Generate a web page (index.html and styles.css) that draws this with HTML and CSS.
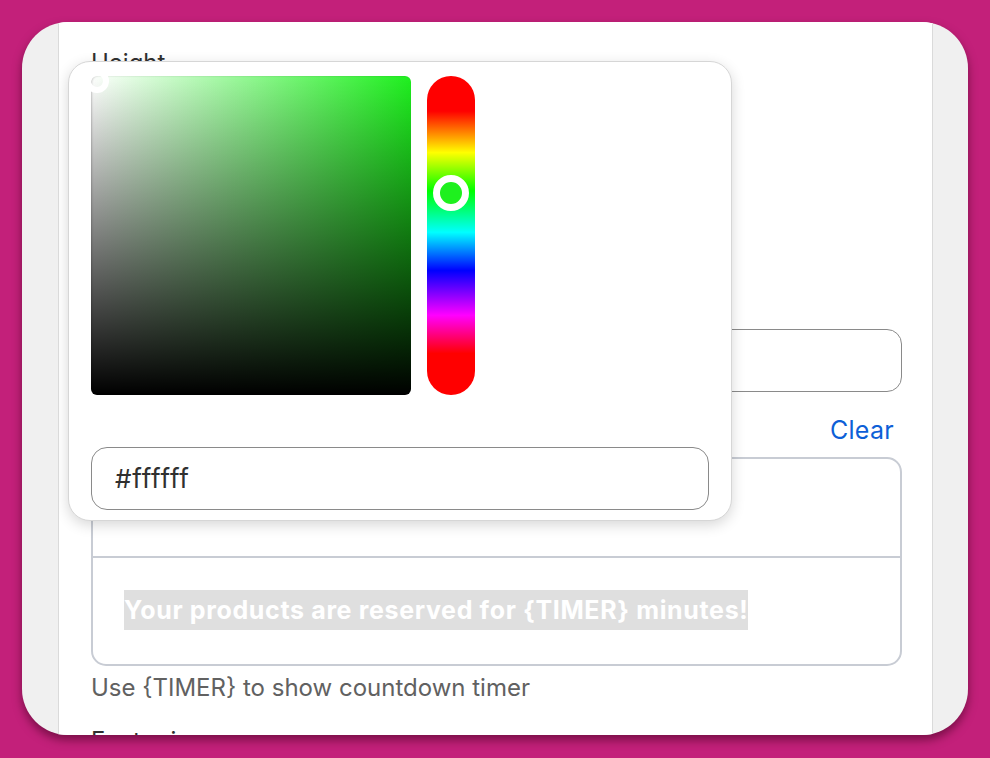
FILE: index.html
```html
<!DOCTYPE html>
<html lang="en">
<head>
<meta charset="utf-8">
<title>Banner settings</title>
<link rel="stylesheet" href="styles.css">
</head>
<body>
<div class="window">
  <div class="gutter"></div>
  <main class="panel">
    <div class="field field-height">
      <label class="label">Height</label>
      <div class="height-control"></div>
    </div>
    <div class="field">
      <label class="label">Text color</label>
      <div class="input color-input"></div>
    </div>
    <div class="field">
      <div class="label-row">
        <label class="label">Banner text</label>
        <a class="link" href="#">Clear</a>
      </div>
      <div class="editor">
        <div class="editor-toolbar"></div>
        <div class="editor-body">
          <span class="preview-text">Your products are reserved for {TIMER} minutes!</span>
        </div>
      </div>
      <p class="help">Use {TIMER} to show countdown timer</p>
    </div>
    <div class="field field-footer">
      <label class="label">Footer icon</label>
    </div>

    <div class="picker">
      <div class="picker-main">
        <div class="sat">
          <span class="sat-thumb"></span>
        </div>
        <div class="hue">
          <span class="hue-thumb"></span>
        </div>
      </div>
      <div class="hex-input">#ffffff</div>
    </div>
  </main>
  <div class="gutter"></div>
</div>
</body>
</html>
```

FILE: styles.css
```css
html, body {
  margin: 0;
  padding: 0;
}

body {
  width: 990px;
  height: 758px;
  overflow: hidden;
  background: #c3207a;
  font-family: "Inter", "Noto Sans", sans-serif;
  color: #303030;
  box-sizing: border-box;
  padding: 22px 22px 0 22px;
}

.window {
  display: flex;
  height: 713px;
  border-radius: 46px;
  overflow: hidden;
  background: #f0f0f0;
  box-shadow: 0 5px 10px rgba(60, 0, 30, 0.55);
}

.gutter {
  width: 36px;
  flex: none;
}

.gutter:last-child {
  width: 35px;
}

.panel {
  position: relative;
  flex: 1;
  background: #ffffff;
  border-left: 1px solid #dadada;
  border-right: 1px solid #dadada;
  padding: 24px 30px 0 32px;
  overflow: hidden;
}

.field {
  display: flex;
  flex-direction: column;
}

.label {
  font-size: 24px;
  line-height: 34px;
  color: #303030;
}

.height-control {
  height: 215px;
}

.input {
  height: 61px;
  border: 1px solid #8a8a8a;
  border-radius: 15px;
  background: #fff;
}

.label-row {
  display: flex;
  justify-content: space-between;
  align-items: center;
  margin-top: 21px;
  margin-bottom: 10px;
}

.link {
  color: #0d5fd7;
  text-decoration: none;
  font-size: 25px;
  line-height: 34px;
  letter-spacing: 0.3px;
  margin-right: 8px;
}

.editor {
  border: 2px solid #c8ccd4;
  border-radius: 15px;
  overflow: hidden;
}

.editor-toolbar {
  height: 97px;
  border-bottom: 2px solid #c8ccd4;
}

.editor-body {
  padding: 32px 31px 31px;
  line-height: 40px;
}

.preview-text {
  display: inline-block;
  background: #dfdfdf;
  color: #ffffff;
  font-weight: 700;
  font-size: 25px;
  letter-spacing: 0.65px;
  line-height: 40px;
}

.help {
  margin: 5px 0 0;
  font-size: 24px;
  line-height: 34px;
  color: #616161;
}

.field-footer {
  margin-top: 19px;
}

/* colour picker popover */
.picker {
  position: absolute;
  left: 9px;
  top: 39px;
  width: 664px;
  height: 460px;
  box-sizing: border-box;
  padding: 14px 22px 10px;
  background: #ffffff;
  border: 1px solid #d6d6d6;
  border-radius: 22px;
  box-shadow: 0 4px 14px rgba(0, 0, 0, 0.16);
  display: flex;
  flex-direction: column;
  justify-content: space-between;
}

.picker-main {
  display: flex;
  gap: 16px;
}

.sat {
  position: relative;
  width: 320px;
  height: 319px;
  border-radius: 6px;
  background:
    linear-gradient(to top, #000 0%, rgba(0,0,0,0) 100%),
    linear-gradient(to right, #ffffff 0%, #1ff01f 100%);
  box-shadow: inset 1px 0 2px rgba(0,0,0,0.2);
}

.sat-thumb {
  position: absolute;
  left: -6px;
  top: -7px;
  width: 12px;
  height: 12px;
  border: 6px solid #ffffff;
  border-radius: 50%;
}

.hue {
  position: relative;
  width: 48px;
  height: 319px;
  border-radius: 24px;
  background: linear-gradient(to bottom,
    #ff0000 0%, #ff0000 11%,
    #ffff00 24%,
    #00ff00 36%,
    #00ffff 49%,
    #0000ff 61%,
    #ff00ff 75%,
    #ff0000 87%, #ff0000 100%);
}

.hue-thumb {
  position: absolute;
  left: 6px;
  top: 99px;
  width: 22px;
  height: 22px;
  border: 7px solid #ffffff;
  border-radius: 50%;
  background: #1ef01e;
}

.hex-input {
  height: 61px;
  border: 1px solid #8a8a8a;
  border-radius: 16px;
  padding-left: 23px;
  font-size: 26px;
  letter-spacing: 0.8px;
  line-height: 61px;
  color: #303030;
}
```
